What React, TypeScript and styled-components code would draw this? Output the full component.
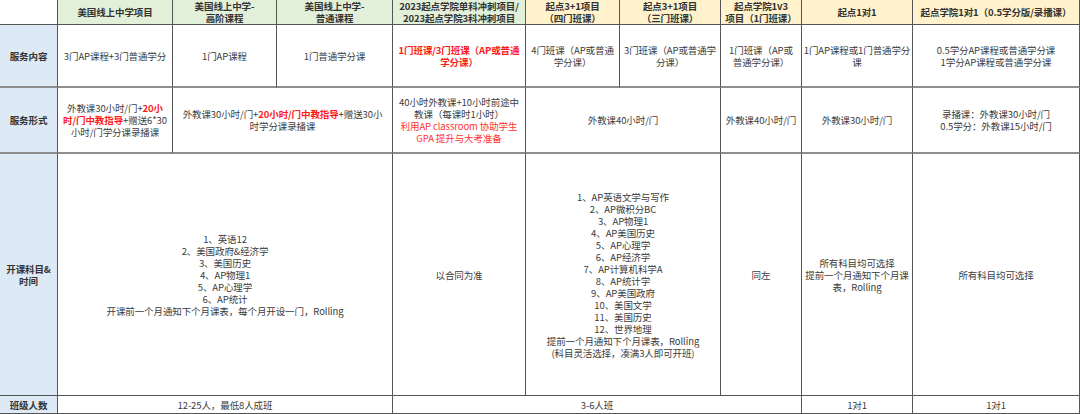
import styled, { createGlobalStyle } from 'styled-components';

const GlobalStyle = createGlobalStyle`
  html, body {
    margin: 0;
    padding: 0;
    background: #fff;
  }
  body {
    font-family: "Noto Sans CJK SC", "Microsoft YaHei", sans-serif;
  }
`;

// spreadsheet grid: 10 columns, 5 rows
const Sheet = styled.div`
  display: grid;
  grid-template-columns: 58px 115px 104px 116px 133px 94px 101px 81px 111px 167px;
  grid-template-rows: 25px 63px 66px 242px 18px;
  width: 1080px;
  font-size: 9.5px;
  color: #3c3c3c;
`;

const Cell = styled.div<{ $span?: number; $thick?: boolean }>`
  grid-column: span ${p => p.$span ?? 1};
  display: flex;
  align-items: center;
  justify-content: center;
  text-align: center;
  white-space: nowrap;
  background: #fff;
  border-right: 1px solid #555;
  border-bottom: ${p => (p.$thick ? '2px solid #8e8e8e' : '1px solid #555')};
  box-sizing: border-box;
  padding: 0 1px;
  line-height: 12px;
  letter-spacing: -0.1px;
  overflow: hidden;
`;

const HeadCell = styled(Cell)<{ $tone?: 'green' | 'yellow' | 'none' }>`
  background: ${p => (p.$tone === 'green' ? '#e2efd9' : p.$tone === 'yellow' ? '#fff2cc' : '#fff')};
  font-weight: 700;
  color: #333;
`;

const Label = styled(Cell)`
  background: #dde9f5;
  font-weight: 700;
  color: #333;
`;

const Hot = styled.span`
  color: #ff1a1a;
  font-weight: 700;
`;

const Note = styled.span`
  color: #ff3333;
`;

const apList = [
  '1、AP英语文学与写作',
  '2、AP微积分BC',
  '3、AP物理1',
  '4、AP美国历史',
  '5、AP心理学',
  '6、AP经济学',
  '7、AP计算机科学A',
  '8、AP统计学',
  '9、AP美国政府',
  '10、美国文学',
  '11、美国历史',
  '12、世界地理',
  '提前一个月通知下个月课表，Rolling',
  '(科目灵活选择，凑满3人即可开班)',
];

const hsList = [
  '1、英语12',
  '2、美国政府&经济学',
  '3、美国历史',
  '4、AP物理1',
  '5、AP心理学',
  '6、AP统计',
  '开课前一个月通知下个月课表，每个月开设一门，Rolling',
];

const Lines = ({ items }: { items: string[] }) => (
  <div>
    {items.map(t => (
      <div key={t}>{t}</div>
    ))}
  </div>
);

export default function App() {
  return (
    <>
      <GlobalStyle />
      <Sheet>
        {/* header */}
        <HeadCell $tone="none" />
        <HeadCell $tone="green">美国线上中学项目</HeadCell>
        <HeadCell $tone="green">美国线上中学-<br />高阶课程</HeadCell>
        <HeadCell $tone="green">美国线上中学-<br />普通课程</HeadCell>
        <HeadCell $tone="green">2023起点学院单科冲刺项目/<br />2023起点学院3科冲刺项目</HeadCell>
        <HeadCell $tone="yellow">起点3+1项目<br />（四门班课）</HeadCell>
        <HeadCell $tone="yellow">起点3+1项目<br />（三门班课）</HeadCell>
        <HeadCell $tone="yellow">起点学院1v3<br />项目（1门班课）</HeadCell>
        <HeadCell $tone="yellow">起点1对1</HeadCell>
        <HeadCell $tone="yellow">起点学院1对1（0.5学分版/录播课）</HeadCell>

        {/* 服务内容 */}
        <Label $thick>服务内容</Label>
        <Cell $thick>3门AP课程+3门普通学分</Cell>
        <Cell $thick>1门AP课程</Cell>
        <Cell $thick>1门普通学分课</Cell>
        <Cell $thick><Hot>1门班课/3门班课（AP或普通<br />学分课）</Hot></Cell>
        <Cell $thick>4门班课（AP或普通<br />学分课）</Cell>
        <Cell $thick>3门班课（AP或普通学<br />分课）</Cell>
        <Cell $thick>1门班课（AP或<br />普通学分课）</Cell>
        <Cell $thick>1门AP课程或1门普通学分<br />课</Cell>
        <Cell $thick>0.5学分AP课程或普通学分课<br />1学分AP课程或普通学分课</Cell>

        {/* 服务形式 */}
        <Label $thick>服务形式</Label>
        <Cell $thick>
          <span>
            外教课30小时/门+<Hot>20小<br />时/门中教指导</Hot>+赠送6*30<br />小时/门学分课录播课
          </span>
        </Cell>
        <Cell $thick $span={2}>
          <span>
            外教课30小时/门+<Hot>20小时/门中教指导</Hot>+赠送30小<br />时学分课录播课
          </span>
        </Cell>
        <Cell $thick>
          <span>
            40小时外教课+10小时前途中<br />教课（每课时1小时）<br />
            <Note>利用AP classroom 协助学生<br />GPA 提升与大考准备</Note>
          </span>
        </Cell>
        <Cell $thick $span={2}>外教课40小时/门</Cell>
        <Cell $thick>外教课40小时/门</Cell>
        <Cell $thick>外教课30小时/门</Cell>
        <Cell $thick>录播课：外教课30小时/门<br />0.5学分：外教课15小时/门</Cell>

        {/* 开课科目&时间 */}
        <Label>开课科目&amp;<br />时间</Label>
        <Cell $span={3}><Lines items={hsList} /></Cell>
        <Cell>以合同为准</Cell>
        <Cell $span={2}><Lines items={apList} /></Cell>
        <Cell>同左</Cell>
        <Cell>所有科目均可选择<br />提前一个月通知下个月课<br />表，Rolling</Cell>
        <Cell>所有科目均可选择</Cell>

        {/* 班级人数 */}
        <Label>班级人数</Label>
        <Cell $span={3}>12-25人，最低8人成班</Cell>
        <Cell $span={4}>3-6人班</Cell>
        <Cell>1对1</Cell>
        <Cell>1对1</Cell>
      </Sheet>
    </>
  );
}
